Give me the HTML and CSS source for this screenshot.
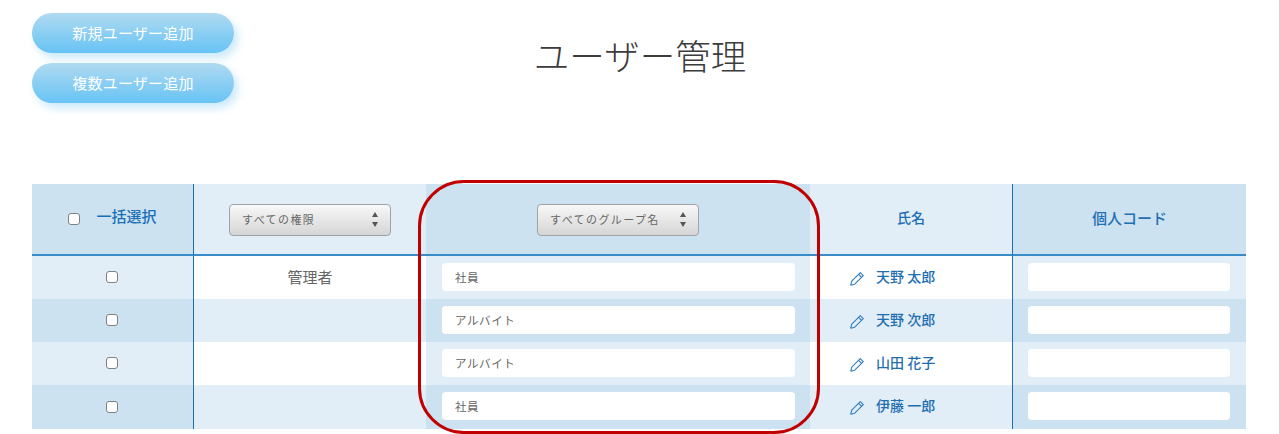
FILE: index.html
```html
<!DOCTYPE html>
<html lang="ja">
<head>
<meta charset="utf-8">
<title>ユーザー管理</title>
<link rel="stylesheet" href="styles.css">
</head>
<body>
<div class="page">
  <header class="top">
    <div class="actions">
      <button class="pill" type="button">新規ユーザー追加</button>
      <button class="pill" type="button">複数ユーザー追加</button>
    </div>
    <h1 class="title">ユーザー管理</h1>
  </header>
  <table class="users">
    <colgroup>
      <col class="c1"><col class="c2"><col class="c3"><col class="c4"><col class="c5">
    </colgroup>
    <thead>
      <tr>
        <th class="dark rule"><label class="bulk"><input class="check" type="checkbox"><span>一括選択</span></label></th>
        <th class="light pick"><span class="select"><select><option>すべての権限</option></select><svg class="updown" width="6" height="15" viewBox="0 0 6 15"><path d="M3 0L6 5H0zM0 10h6l-3 5z"/></svg></span></th>
        <th class="dark pick"><span class="select"><select><option>すべてのグループ名</option></select><svg class="updown" width="6" height="15" viewBox="0 0 6 15"><path d="M3 0L6 5H0zM0 10h6l-3 5z"/></svg></span></th>
        <th class="light rule">氏名</th>
        <th class="dark code">個人コード</th>
      </tr>
    </thead>
    <tbody>
      <tr>
        <td class="light rule mid"><input class="check" type="checkbox"></td>
        <td class="white mid role">管理者</td>
        <td class="light"><input class="field group" type="text" value="社員"></td>
        <td class="white rule"><a class="name"><svg class="pen" width="15" height="15" viewBox="0 0 15 15"><path d="M10.3 1.6l3 3-8.6 8.6-3.9 1 .9-4z"/><path d="M8.6 3.3l3 3"/></svg>天野 太郎</a></td>
        <td class="light"><input class="field" type="text"></td>
      </tr>
      <tr>
        <td class="dark rule mid"><input class="check" type="checkbox"></td>
        <td class="light mid role"></td>
        <td class="dark"><input class="field group" type="text" value="アルバイト"></td>
        <td class="light rule"><a class="name"><svg class="pen" width="15" height="15" viewBox="0 0 15 15"><path d="M10.3 1.6l3 3-8.6 8.6-3.9 1 .9-4z"/><path d="M8.6 3.3l3 3"/></svg>天野 次郎</a></td>
        <td class="dark"><input class="field" type="text"></td>
      </tr>
      <tr>
        <td class="light rule mid"><input class="check" type="checkbox"></td>
        <td class="white mid role"></td>
        <td class="light"><input class="field group" type="text" value="アルバイト"></td>
        <td class="white rule"><a class="name"><svg class="pen" width="15" height="15" viewBox="0 0 15 15"><path d="M10.3 1.6l3 3-8.6 8.6-3.9 1 .9-4z"/><path d="M8.6 3.3l3 3"/></svg>山田 花子</a></td>
        <td class="light"><input class="field" type="text"></td>
      </tr>
      <tr class="last">
        <td class="dark rule mid"><input class="check" type="checkbox"></td>
        <td class="light mid role"></td>
        <td class="dark"><input class="field group" type="text" value="社員"></td>
        <td class="light rule"><a class="name"><svg class="pen" width="15" height="15" viewBox="0 0 15 15"><path d="M10.3 1.6l3 3-8.6 8.6-3.9 1 .9-4z"/><path d="M8.6 3.3l3 3"/></svg>伊藤 一郎</a></td>
        <td class="dark"><input class="field" type="text"></td>
      </tr>
    </tbody>
  </table>
  <div class="ring"></div>
</div>
</body>
</html>
```

FILE: styles.css
```css
* { box-sizing: border-box; }
html, body { margin: 0; height: 100%; overflow: hidden; background: #fff; }
body {
  font-family: "Noto Sans CJK JP", "Noto Sans", sans-serif;
  color: #555;
}
.page {
  position: relative;
  height: 434px;
  padding: 13px 34px 0 32px;
  border-right: 1px solid #d4d4d4;
}
.top {
  display: grid;
  grid-template-columns: 1fr auto 1fr;
  height: 171px;
}
.actions {
  display: flex;
  flex-direction: column;
  align-items: flex-start;
  gap: 10px;
}
.pill {
  width: 202px;
  height: 40px;
  border: 0;
  border-radius: 20px;
  font: 400 15px/38px "Noto Sans CJK JP", sans-serif;
  letter-spacing: .25px;
  color: #fff;
  padding: 0;
  background: linear-gradient(#b0daf1, #67c3f5);
  box-shadow: 4px 5px 9px rgba(120, 200, 245, .4);
}
.title {
  grid-column: 2;
  margin: 17px 0 0;
  padding-left: 3px;
  font-size: 35.5px;
  font-weight: 300;
  line-height: 50px;
  color: #3c3c3c;
}
.users {
  width: 1214px;
  table-layout: fixed;
  border-collapse: separate;
  border-spacing: 0;
}
.c1 { width: 162px; }
.c2 { width: 232px; }
.c3 { width: 384px; }
.c4 { width: 203px; }
.c5 { width: 233px; }
.dark {
  background-color: #cce2f1;
}
.light {
  background-color: #e2eef7;
  background-image: radial-gradient(circle at 1px 1px, #f1f7f0 .5px, transparent .7px);
  background-size: 7px 7px;
}
.white { background: #fff; }
.rule { border-right: 1px solid #1a6fbd; }
th {
  height: 72px;
  padding: 0 0 4px;
  border-bottom: 2px solid #3a8cc8;
  font-size: 14px;
  font-weight: 500;
  color: #1f6fb2;
  text-align: center;
  vertical-align: middle;
}
th.pick { padding: 2px 0 0; }
.code { font-size: 15px; }
td {
  height: 43px;
  padding: 7px 0 0;
  vertical-align: top;
  text-align: center;
}
.last td { height: 44px; }
td.mid { padding: 0 1px 1px 0; vertical-align: middle; }
td.role { padding: 0 0 3px; font-size: 15px; color: #666; }
.bulk {
  display: inline-flex;
  align-items: center;
  gap: 16px;
  font-size: 15px;
  color: #1a6fb5;
}
.bulk .check { margin-top: 6px; }
.check {
  appearance: none;
  display: block;
  width: 12px;
  height: 12px;
  margin: 0 auto;
  background: #fff;
  border: 1px solid #808080;
  border-radius: 3px;
}
.select {
  position: relative;
  display: block;
  width: 162px;
  height: 32px;
  margin: 0 auto;
}
.select select {
  appearance: none;
  display: block;
  width: 100%;
  height: 100%;
  padding: 0 0 2px 12px;
  border: 1px solid #a3a3a3;
  border-radius: 4px;
  background: linear-gradient(#f8f8f8, #d5d5d5);
  font: 400 11px "Noto Sans CJK JP", sans-serif;
  letter-spacing: 1.4px;
  color: #666;
}
.updown {
  position: absolute;
  right: 13px;
  top: 8px;
  fill: #555;
}
.field {
  display: block;
  width: 202px;
  height: 28px;
  margin: 0 0 0 15px;
  padding: 0 13px;
  border: 0;
  border-radius: 4px;
  background: #fff;
  font: 400 11.5px "Noto Sans CJK JP", sans-serif;
  letter-spacing: .6px;
  color: #666;
}
.group { width: 353px; margin-left: 16px; }
.name {
  display: flex;
  align-items: center;
  height: 26px;
  padding-left: 40px;
  gap: 12px;
  font-size: 14px;
  font-weight: 500;
  color: #1f6fb2;
  line-height: 26px;
}
.pen {
  fill: none;
  stroke: #2f7dbf;
  stroke-width: 1.1;
  stroke-linejoin: round;
  margin-top: 4px;
  margin-right: -1px;
}
.ring {
  position: absolute;
  left: 418px;
  top: 180px;
  width: 402px;
  height: 254px;
  border: 3px solid #c00000;
  border-radius: 46px;
  pointer-events: none;
}
```
